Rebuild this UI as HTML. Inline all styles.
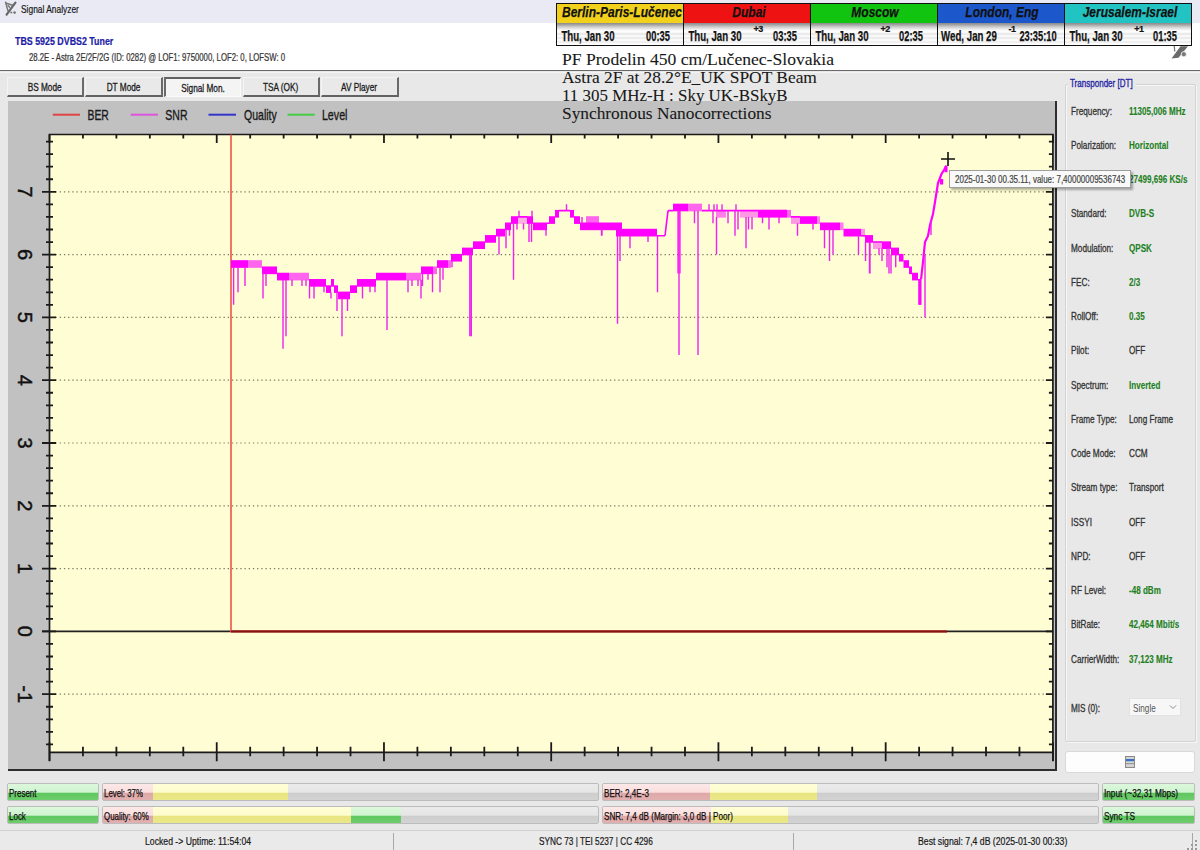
<!DOCTYPE html><html><head><meta charset="utf-8"><style>
*{margin:0;padding:0;box-sizing:border-box}
html,body{width:1200px;height:850px;overflow:hidden;background:#e8e8e8;font-family:"Liberation Sans",sans-serif;position:relative;-webkit-text-stroke:.22px currentColor}
svg{-webkit-text-stroke:0}
.a{position:absolute;white-space:nowrap}
.s{display:inline-block;transform-origin:0 0}
.sc{display:inline-block;transform-origin:50% 0}
#title{left:0;top:0;width:1200px;height:23px;background:#e9eaf4}
#hdr{left:0;top:23px;width:1200px;height:47px;background:#fff}
#hline{left:0;top:70px;width:1200px;height:1.3px;background:#686868}
#hline2{left:0;top:72px;width:1200px;height:1.3px;background:#f3f3f3}
.btn{top:77px;height:20px;background:#e9e9e9;border-top:1px solid #f4f4f4;border-left:1px solid #f4f4f4;border-right:2px solid #6a6a6a;border-bottom:2px solid #626262;font-size:11px;color:#1a1a1a;text-align:center;line-height:19px;-webkit-text-stroke:.3px #1a1a1a}
.btn.on{background:#f4f4f4;border-top:2px solid #626262;border-left:2px solid #6a6a6a;border-right:1px solid #fafafa;border-bottom:1px solid #fafafa;line-height:19px}
#panel{left:8px;top:101px;width:1049px;height:670px;background:#c1c1c1;border-right:2px solid #2e2e2e;border-bottom:2px solid #2e2e2e}
.clk{top:3px;height:43px;border-top:1.5px solid #111;border-bottom:1.5px solid #111;border-left:1.5px solid #111;overflow:hidden}
.clk .h{position:absolute;left:0;top:0;right:0;height:19.5px;font:italic bold 15px "Liberation Sans",sans-serif;color:#111;line-height:16px}
.cx{position:absolute;left:calc(50% + 1.5px);top:0;display:inline-block;width:max-content;transform-origin:0 0;-webkit-text-stroke:.25px #111}
.clk .d{position:absolute;left:0;top:19px;right:0;bottom:0;background:linear-gradient(#8a8a8a,#a8a8a8 2px,#cfcfcf 4px,#e9e9e9 6px,#f6f6f6 7px,#fff 9px,#e4e4e4 11px,#fff 13px,#e6e6e6 15px,#fff 17px,#ebebeb 19px,#fff 21px,#fff)}
.clk .dt{position:absolute;top:3.9px;width:0;font:bold 15px "Liberation Sans",sans-serif;color:#141414}
.clk .tm{position:absolute;top:3.9px;width:0;font:bold 15px "Liberation Sans",sans-serif;color:#141414}
.clk .of{position:absolute;top:0.5px;width:20px;text-align:center;letter-spacing:-.6px;font:bold 9px "Liberation Sans",sans-serif;color:#141414}
.ov{left:562px;font:16.3px "Liberation Serif",serif;color:#181818;-webkit-text-stroke:.08px #181818}
#grp{left:1065px;top:84px;width:131px;height:658px;border:1px solid #d4d4d4;border-radius:2px;box-shadow:inset 1px 1px 0 #f6f6f6,1px 1px 0 #f6f6f6}
#grpt{left:1068px;top:77px;background:#e8e8e8;padding:0 2px;font-size:11px;color:#2626a4;height:13px;width:68px;-webkit-text-stroke:.35px #2626a4}
.lb{left:1070.5px;font-size:10.5px;color:#333;-webkit-text-stroke:.3px #333}
.vl{left:1128.5px;font-size:10.5px;color:#218021;font-weight:bold;-webkit-text-stroke:.1px #218021}
.vk{left:1128.5px;font-size:10.5px;color:#333;-webkit-text-stroke:.3px #333}
.pb{height:18px;border:1px solid #bcbcbc;border-radius:2px;overflow:hidden;background:linear-gradient(#ebebeb,#e5e5e5 52%,#cdcdcd 56%,#d3d3d3)}
.pb i{position:absolute;top:0;bottom:0}
.pk{background:linear-gradient(#fde8e8,#fbdede 52%,#dea8a8 56%,#e2b0b0)}
.yl{background:linear-gradient(#fffed6,#fdfcce 52%,#e8e480 56%,#ebe88a)}
.gr{background:linear-gradient(#dcf8dc,#cff3cf 52%,#5fc75f 56%,#6dcd6d)}
.pt{position:absolute;left:1px;top:2.5px;font-size:10.5px;color:#111;-webkit-text-stroke:.25px #111;white-space:nowrap;transform-origin:0 0}
#sbar{left:0;top:830px;width:1200px;height:20px;border-top:1px solid #d0d0d0;background:#eaeaea}
.st{top:835px;font-size:11px;color:#1a1a1a}
</style></head><body>
<div id="title" class="a"></div>
<svg class="a" style="left:0;top:0" width="22" height="18" viewBox="0 0 22 18"><path d="M5.6 2.2 L7.9 10.6 M6.4 3.3 L12.6 5.2 M8.3 5.8 L9.6 7.2" stroke="#777" stroke-width="1.5" fill="none" stroke-linecap="round"/><path d="M15.4 2.6 L6.6 14.6" stroke="#666" stroke-width="2.2" stroke-linecap="round"/><circle cx="11.3" cy="12.5" r="1.1" fill="#777"/><circle cx="14.6" cy="12.6" r="1.3" fill="#777"/></svg>
<div class="a" style="left:20.5px;top:3px;font-size:11.5px;color:#1a1a1a"><span class="s" style="transform:scaleX(0.73)">Signal Analyzer</span></div>
<div id="hdr" class="a"></div>
<div class="a" style="left:15px;top:35px;font-size:11.5px;color:#1c1ca6;font-weight:bold"><span class="s" style="transform:scaleX(0.77)">TBS 5925 DVBS2 Tuner</span></div>
<div class="a" style="left:29px;top:52px;font-size:10px;color:#353535"><span class="s" style="transform:scaleX(0.777)">28.2E - Astra 2E/2F/2G (ID: 0282) @ LOF1: 9750000, LOF2: 0, LOFSW: 0</span></div>
<div id="hline" class="a"></div><div id="hline2" class="a"></div>
<div class="a btn" style="left:7px;width:77px"><span class="sc" style="transform:scaleX(0.75)">BS Mode</span></div>
<div class="a btn" style="left:85px;width:78px"><span class="sc" style="transform:scaleX(0.75)">DT Mode</span></div>
<div class="a btn on" style="left:164px;width:77px"><span class="sc" style="transform:scaleX(0.75)">Signal Mon.</span></div>
<div class="a btn" style="left:243px;width:77px"><span class="sc" style="transform:scaleX(0.75)">TSA (OK)</span></div>
<div class="a btn" style="left:321px;width:78px"><span class="sc" style="transform:scaleX(0.75)">AV Player</span></div>
<div id="panel" class="a"></div>
<svg id="chart" class="a" style="left:0;top:0" width="1200" height="850"><rect x="49.5" y="134.5" width="1003.4000000000001" height="617.8" fill="#fffdd3"/>
<line x1="55.5" y1="191.80" x2="1046.9" y2="191.80" stroke="#7a7a60" stroke-width="1.2" stroke-dasharray="1.3 2.9"/>
<line x1="55.5" y1="254.60" x2="1046.9" y2="254.60" stroke="#7a7a60" stroke-width="1.2" stroke-dasharray="1.3 2.9"/>
<line x1="55.5" y1="317.40" x2="1046.9" y2="317.40" stroke="#7a7a60" stroke-width="1.2" stroke-dasharray="1.3 2.9"/>
<line x1="55.5" y1="380.20" x2="1046.9" y2="380.20" stroke="#7a7a60" stroke-width="1.2" stroke-dasharray="1.3 2.9"/>
<line x1="55.5" y1="443.00" x2="1046.9" y2="443.00" stroke="#7a7a60" stroke-width="1.2" stroke-dasharray="1.3 2.9"/>
<line x1="55.5" y1="505.80" x2="1046.9" y2="505.80" stroke="#7a7a60" stroke-width="1.2" stroke-dasharray="1.3 2.9"/>
<line x1="55.5" y1="568.60" x2="1046.9" y2="568.60" stroke="#7a7a60" stroke-width="1.2" stroke-dasharray="1.3 2.9"/>
<line x1="55.5" y1="694.20" x2="1046.9" y2="694.20" stroke="#7a7a60" stroke-width="1.2" stroke-dasharray="1.3 2.9"/>
<line x1="42" y1="631.40" x2="1052.9" y2="631.40" stroke="#222" stroke-width="1.6"/>
<path d="M49.5 134.5 H1052.9 M49.5 133.8 V760.8 M1052.9 133.8 V760.8 M49.5 752.3 H1052.9" stroke="#1a1a1a" stroke-width="1.7" fill="none"/>
<path d="M49.50 742.3 V761.3 M49.50 134.5 V143.0 M82.95 746.8 V756.3 M82.95 134.5 V138.5 M116.39 746.8 V756.3 M116.39 134.5 V138.5 M149.84 746.8 V756.3 M149.84 134.5 V138.5 M183.29 746.8 V756.3 M183.29 134.5 V138.5 M216.73 742.3 V761.3 M216.73 134.5 V143.0 M250.18 746.8 V756.3 M250.18 134.5 V138.5 M283.63 746.8 V756.3 M283.63 134.5 V138.5 M317.07 746.8 V756.3 M317.07 134.5 V138.5 M350.52 746.8 V756.3 M350.52 134.5 V138.5 M383.97 742.3 V761.3 M383.97 134.5 V143.0 M417.41 746.8 V756.3 M417.41 134.5 V138.5 M450.86 746.8 V756.3 M450.86 134.5 V138.5 M484.31 746.8 V756.3 M484.31 134.5 V138.5 M517.75 746.8 V756.3 M517.75 134.5 V138.5 M551.20 742.3 V761.3 M551.20 134.5 V143.0 M584.65 746.8 V756.3 M584.65 134.5 V138.5 M618.09 746.8 V756.3 M618.09 134.5 V138.5 M651.54 746.8 V756.3 M651.54 134.5 V138.5 M684.99 746.8 V756.3 M684.99 134.5 V138.5 M718.43 742.3 V761.3 M718.43 134.5 V143.0 M751.88 746.8 V756.3 M751.88 134.5 V138.5 M785.33 746.8 V756.3 M785.33 134.5 V138.5 M818.77 746.8 V756.3 M818.77 134.5 V138.5 M852.22 746.8 V756.3 M852.22 134.5 V138.5 M885.67 742.3 V761.3 M885.67 134.5 V143.0 M919.11 746.8 V756.3 M919.11 134.5 V138.5 M952.56 746.8 V756.3 M952.56 134.5 V138.5 M986.01 746.8 V756.3 M986.01 134.5 V138.5 M1019.45 746.8 V756.3 M1019.45 134.5 V138.5 M1052.90 742.3 V761.3 M1052.90 134.5 V143.0 M46.0 744.44 H53.0 M1048.9 744.44 H1052.9 M46.0 731.88 H53.0 M1048.9 731.88 H1052.9 M46.0 719.32 H53.0 M1048.9 719.32 H1052.9 M46.0 706.76 H53.0 M1048.9 706.76 H1052.9 M42.0 694.20 H56.0 M1045.9 694.20 H1052.9 M46.0 681.64 H53.0 M1048.9 681.64 H1052.9 M46.0 669.08 H53.0 M1048.9 669.08 H1052.9 M46.0 656.52 H53.0 M1048.9 656.52 H1052.9 M46.0 643.96 H53.0 M1048.9 643.96 H1052.9 M42.0 631.40 H56.0 M1045.9 631.40 H1052.9 M46.0 618.84 H53.0 M1048.9 618.84 H1052.9 M46.0 606.28 H53.0 M1048.9 606.28 H1052.9 M46.0 593.72 H53.0 M1048.9 593.72 H1052.9 M46.0 581.16 H53.0 M1048.9 581.16 H1052.9 M42.0 568.60 H56.0 M1045.9 568.60 H1052.9 M46.0 556.04 H53.0 M1048.9 556.04 H1052.9 M46.0 543.48 H53.0 M1048.9 543.48 H1052.9 M46.0 530.92 H53.0 M1048.9 530.92 H1052.9 M46.0 518.36 H53.0 M1048.9 518.36 H1052.9 M42.0 505.80 H56.0 M1045.9 505.80 H1052.9 M46.0 493.24 H53.0 M1048.9 493.24 H1052.9 M46.0 480.68 H53.0 M1048.9 480.68 H1052.9 M46.0 468.12 H53.0 M1048.9 468.12 H1052.9 M46.0 455.56 H53.0 M1048.9 455.56 H1052.9 M42.0 443.00 H56.0 M1045.9 443.00 H1052.9 M46.0 430.44 H53.0 M1048.9 430.44 H1052.9 M46.0 417.88 H53.0 M1048.9 417.88 H1052.9 M46.0 405.32 H53.0 M1048.9 405.32 H1052.9 M46.0 392.76 H53.0 M1048.9 392.76 H1052.9 M42.0 380.20 H56.0 M1045.9 380.20 H1052.9 M46.0 367.64 H53.0 M1048.9 367.64 H1052.9 M46.0 355.08 H53.0 M1048.9 355.08 H1052.9 M46.0 342.52 H53.0 M1048.9 342.52 H1052.9 M46.0 329.96 H53.0 M1048.9 329.96 H1052.9 M42.0 317.40 H56.0 M1045.9 317.40 H1052.9 M46.0 304.84 H53.0 M1048.9 304.84 H1052.9 M46.0 292.28 H53.0 M1048.9 292.28 H1052.9 M46.0 279.72 H53.0 M1048.9 279.72 H1052.9 M46.0 267.16 H53.0 M1048.9 267.16 H1052.9 M42.0 254.60 H56.0 M1045.9 254.60 H1052.9 M46.0 242.04 H53.0 M1048.9 242.04 H1052.9 M46.0 229.48 H53.0 M1048.9 229.48 H1052.9 M46.0 216.92 H53.0 M1048.9 216.92 H1052.9 M46.0 204.36 H53.0 M1048.9 204.36 H1052.9 M42.0 191.80 H56.0 M1045.9 191.80 H1052.9 M46.0 179.24 H53.0 M1048.9 179.24 H1052.9 M46.0 166.68 H53.0 M1048.9 166.68 H1052.9 M46.0 154.12 H53.0 M1048.9 154.12 H1052.9 M46.0 141.56 H53.0 M1048.9 141.56 H1052.9" stroke="#1a1a1a" stroke-width="1.8" fill="none"/>
<text transform="translate(25 191.80) rotate(90)" text-anchor="middle" dy="0.36em" font-family="Liberation Sans" font-size="20" fill="#111" stroke="#111" stroke-width=".45">7</text>
<text transform="translate(25 254.60) rotate(90)" text-anchor="middle" dy="0.36em" font-family="Liberation Sans" font-size="20" fill="#111" stroke="#111" stroke-width=".45">6</text>
<text transform="translate(25 317.40) rotate(90)" text-anchor="middle" dy="0.36em" font-family="Liberation Sans" font-size="20" fill="#111" stroke="#111" stroke-width=".45">5</text>
<text transform="translate(25 380.20) rotate(90)" text-anchor="middle" dy="0.36em" font-family="Liberation Sans" font-size="20" fill="#111" stroke="#111" stroke-width=".45">4</text>
<text transform="translate(25 443.00) rotate(90)" text-anchor="middle" dy="0.36em" font-family="Liberation Sans" font-size="20" fill="#111" stroke="#111" stroke-width=".45">3</text>
<text transform="translate(25 505.80) rotate(90)" text-anchor="middle" dy="0.36em" font-family="Liberation Sans" font-size="20" fill="#111" stroke="#111" stroke-width=".45">2</text>
<text transform="translate(25 568.60) rotate(90)" text-anchor="middle" dy="0.36em" font-family="Liberation Sans" font-size="20" fill="#111" stroke="#111" stroke-width=".45">1</text>
<text transform="translate(25 631.40) rotate(90)" text-anchor="middle" dy="0.36em" font-family="Liberation Sans" font-size="20" fill="#111" stroke="#111" stroke-width=".45">0</text>
<text transform="translate(25 694.20) rotate(90)" text-anchor="middle" dy="0.36em" font-family="Liberation Sans" font-size="20" fill="#111" stroke="#111" stroke-width=".45">-1</text>
<line x1="52.8" y1="114.7" x2="80" y2="114.7" stroke="#e04545" stroke-width="2"/>
<text x="87.5" y="119.5" font-family="Liberation Sans" font-size="14.5" fill="#1a1a1a" stroke="#1a1a1a" stroke-width=".35" textLength="21.3" lengthAdjust="spacingAndGlyphs">BER</text>
<line x1="130.7" y1="114.7" x2="158" y2="114.7" stroke="#dd55dd" stroke-width="2"/>
<text x="165.3" y="119.5" font-family="Liberation Sans" font-size="14.5" fill="#1a1a1a" stroke="#1a1a1a" stroke-width=".35" textLength="22.2" lengthAdjust="spacingAndGlyphs">SNR</text>
<line x1="208.5" y1="114.7" x2="236" y2="114.7" stroke="#3535cc" stroke-width="2"/>
<text x="244" y="119.5" font-family="Liberation Sans" font-size="14.5" fill="#1a1a1a" stroke="#1a1a1a" stroke-width=".35" textLength="32.8" lengthAdjust="spacingAndGlyphs">Quality</text>
<line x1="287.5" y1="114.7" x2="314.7" y2="114.7" stroke="#44cc44" stroke-width="2"/>
<text x="321.9" y="119.5" font-family="Liberation Sans" font-size="14.5" fill="#1a1a1a" stroke="#1a1a1a" stroke-width=".35" textLength="25.6" lengthAdjust="spacingAndGlyphs">Level</text>
<path d="M231 134.5 V631.40 H947" stroke="#ec5646" stroke-width="1.6" fill="none"/>
<line x1="231" y1="631.40" x2="947" y2="631.40" stroke="#8a1010" stroke-width="2"/>
<rect x="231" y="260.18" width="17" height="7.68" fill="#ff00ff" fill-opacity="1"/>
<rect x="248" y="260.18" width="14" height="7.68" fill="#ff00ff" fill-opacity="0.6"/>
<rect x="262" y="266.46" width="15" height="7.68" fill="#ff00ff" fill-opacity="1"/>
<rect x="277" y="272.74" width="12" height="7.68" fill="#ff00ff" fill-opacity="1"/>
<rect x="289" y="272.74" width="20" height="7.68" fill="#ff00ff" fill-opacity="0.6"/>
<rect x="309" y="279.02" width="17" height="7.68" fill="#ff00ff" fill-opacity="1"/>
<rect x="326" y="285.30" width="5" height="7.68" fill="#ff00ff" fill-opacity="1"/>
<rect x="331" y="279.02" width="3" height="7.68" fill="#ff00ff" fill-opacity="1"/>
<rect x="334" y="285.30" width="4" height="7.68" fill="#ff00ff" fill-opacity="1"/>
<rect x="338" y="291.58" width="12" height="7.68" fill="#ff00ff" fill-opacity="1"/>
<rect x="350" y="285.30" width="7" height="7.68" fill="#ff00ff" fill-opacity="1"/>
<rect x="357" y="279.02" width="19" height="7.68" fill="#ff00ff" fill-opacity="1"/>
<rect x="376" y="272.74" width="30" height="7.68" fill="#ff00ff" fill-opacity="1"/>
<rect x="406" y="272.74" width="15" height="7.68" fill="#ff00ff" fill-opacity="0.6"/>
<rect x="421" y="266.46" width="12" height="7.68" fill="#ff00ff" fill-opacity="1"/>
<rect x="433" y="266.46" width="4" height="7.68" fill="#ff00ff" fill-opacity="0.6"/>
<rect x="437" y="260.18" width="11" height="7.68" fill="#ff00ff" fill-opacity="1"/>
<rect x="448" y="260.18" width="3" height="7.68" fill="#ff00ff" fill-opacity="0.6"/>
<rect x="451" y="253.90" width="11" height="7.68" fill="#ff00ff" fill-opacity="1"/>
<rect x="462" y="247.62" width="11" height="7.68" fill="#ff00ff" fill-opacity="1"/>
<rect x="473" y="241.34" width="12" height="7.68" fill="#ff00ff" fill-opacity="1"/>
<rect x="485" y="235.06" width="11" height="7.68" fill="#ff00ff" fill-opacity="1"/>
<rect x="496" y="228.78" width="9" height="7.68" fill="#ff00ff" fill-opacity="1"/>
<rect x="505" y="222.50" width="6" height="7.68" fill="#ff00ff" fill-opacity="1"/>
<rect x="511" y="216.22" width="7" height="7.68" fill="#ff00ff" fill-opacity="1"/>
<rect x="518" y="216.22" width="9" height="7.68" fill="#ff00ff" fill-opacity="0.3"/>
<rect x="527" y="216.22" width="6" height="7.68" fill="#ff00ff" fill-opacity="1"/>
<rect x="533" y="222.50" width="14" height="7.68" fill="#ff00ff" fill-opacity="1"/>
<rect x="549" y="216.22" width="6" height="7.68" fill="#ff00ff" fill-opacity="1"/>
<rect x="555" y="209.94" width="4" height="7.68" fill="#ff00ff" fill-opacity="1"/>
<rect x="570" y="209.94" width="4" height="7.68" fill="#ff00ff" fill-opacity="1"/>
<rect x="574" y="216.22" width="6" height="7.68" fill="#ff00ff" fill-opacity="1"/>
<rect x="580" y="222.50" width="20" height="7.68" fill="#ff00ff" fill-opacity="1"/>
<rect x="586" y="216.22" width="13" height="7.68" fill="#ff00ff" fill-opacity="0.6"/>
<rect x="600" y="222.50" width="22" height="7.68" fill="#ff00ff" fill-opacity="1"/>
<rect x="616" y="228.78" width="41" height="7.68" fill="#ff00ff" fill-opacity="1"/>
<rect x="673" y="203.66" width="15" height="7.68" fill="#ff00ff" fill-opacity="1"/>
<rect x="688" y="203.66" width="14" height="7.68" fill="#ff00ff" fill-opacity="0.6"/>
<rect x="716" y="209.94" width="10" height="7.68" fill="#ff00ff" fill-opacity="0.5"/>
<rect x="740" y="209.94" width="18" height="7.68" fill="#ff00ff" fill-opacity="0.4"/>
<rect x="758" y="209.94" width="29" height="7.68" fill="#ff00ff" fill-opacity="1"/>
<rect x="787" y="209.94" width="4" height="7.68" fill="#ff00ff" fill-opacity="0.6"/>
<rect x="791" y="216.22" width="9" height="7.68" fill="#ff00ff" fill-opacity="0.4"/>
<rect x="800" y="216.22" width="17" height="7.68" fill="#ff00ff" fill-opacity="1"/>
<rect x="817" y="216.22" width="3" height="7.68" fill="#ff00ff" fill-opacity="0.5"/>
<rect x="820" y="222.50" width="20" height="7.68" fill="#ff00ff" fill-opacity="1"/>
<rect x="840" y="222.50" width="3.5" height="7.68" fill="#ff00ff" fill-opacity="0.5"/>
<rect x="843.5" y="228.78" width="17.5" height="7.68" fill="#ff00ff" fill-opacity="1"/>
<rect x="861" y="228.78" width="4" height="7.68" fill="#ff00ff" fill-opacity="0.4"/>
<rect x="865" y="235.06" width="8" height="7.68" fill="#ff00ff" fill-opacity="1"/>
<rect x="873" y="241.34" width="9" height="7.68" fill="#ff00ff" fill-opacity="0.4"/>
<rect x="882" y="241.34" width="9" height="7.68" fill="#ff00ff" fill-opacity="1"/>
<rect x="891" y="247.62" width="8" height="7.68" fill="#ff00ff" fill-opacity="1"/>
<rect x="899" y="253.90" width="4.5" height="7.68" fill="#ff00ff" fill-opacity="1"/>
<rect x="903.5" y="260.18" width="5.5" height="7.68" fill="#ff00ff" fill-opacity="1"/>
<rect x="909" y="266.46" width="3" height="7.68" fill="#ff00ff" fill-opacity="1"/>
<rect x="912" y="272.74" width="6" height="7.68" fill="#ff00ff" fill-opacity="1"/>
<path d="M518 216.92 H527 M547 223.20 H549 M559 210.64 H570 M657 235.76 H665 M668 210.64 H673 M702 210.64 H787 M791 216.92 H800 M861 235.76 H865 M873 242.04 H882 M918 279.72 H921 M665 235.76 L668 210.64" stroke="#ff00ff" stroke-width="1.6" fill="none"/>
<polyline points="921,279.5 923,262 925,242 928,236 930,225 933,214 935,202 938,183 941.5,174 944,170 946.5,165.5" stroke="#ff00ff" stroke-width="2.2" fill="none"/>
<path d="M233.6 267.16 V304.84 M238 267.16 V292.28 M245 267.16 V286.00 M263 273.44 V298.56 M266 273.44 V286.00 M283 279.72 V348.80 M286 279.72 V336.24 M292 279.72 V286.00 M302 279.72 V286.00 M306 279.72 V286.00 M309.5 286.00 V298.56 M314 286.00 V298.56 M324 286.00 V292.28 M331 292.28 V298.56 M337 292.28 V311.12 M342 298.56 V336.24 M347.5 298.56 V311.12 M362.5 286.00 V298.56 M370 286.00 V292.28 M375 286.00 V292.28 M387 279.72 V329.96 M408 279.72 V292.28 M412 279.72 V286.00 M418 279.72 V286.00 M421 279.72 V298.56 M422.5 273.44 V286.00 M428 273.44 V279.72 M432.5 273.44 V292.28 M440 267.16 V292.28 M443 267.16 V279.72 M449 267.16 V267.16 M452 260.88 V267.16 M469.8 254.60 V336.24 M471.3 254.60 V336.24 M499 235.76 V254.60 M506 229.48 V248.32 M509.5 229.48 V235.76 M513.5 223.20 V279.72 M517 223.20 V229.48 M523.5 223.20 V229.48 M529 223.20 V242.04 M531.5 223.20 V242.04 M546 229.48 V235.76 M601.5 229.48 V235.76 M602 229.48 V235.76 M617.5 235.76 V323.68 M620 235.76 V260.88 M630 235.76 V248.32 M648 235.76 V242.04 M657.5 235.76 V292.28 M679 210.64 V355.08 M698 210.64 V355.08 M694.5 210.64 V223.20 M713 210.64 V223.20 M716.5 216.92 V254.60 M728 210.64 V223.20 M735 210.64 V235.76 M738 210.64 V229.48 M741 216.92 V216.92 M746 216.92 V248.32 M748.5 216.92 V229.48 M752 216.92 V229.48 M762.5 216.92 V223.20 M769 216.92 V229.48 M779 216.92 V223.20 M797.5 223.20 V235.76 M813 223.20 V229.48 M824.5 229.48 V248.32 M829.5 229.48 V260.88 M833 229.48 V254.60 M858.5 235.76 V254.60 M865.5 242.04 V260.88 M869.5 242.04 V273.44 M879 248.32 V254.60 M870 242.04 V273.44 M874.5 248.32 V248.32 M882 248.32 V260.88 M887 248.32 V267.16 M889 248.32 V273.44 M891 254.60 V273.44 M895.7 254.60 V267.16 M919 279.72 V304.84 M920.5 279.72 V304.84 M925 254.60 V317.40 M931 221 V235" stroke="#ee22ee" stroke-width="1.4" fill="none"/>
<rect x="677" y="210.64" width="4" height="62.80" fill="#ff00ff" fill-opacity=".6"/>
<rect x="918.5" y="279.72" width="3" height="25.12" fill="#ff00ff" fill-opacity=".8"/>
<path d="M519 210.64 V216.92 M532 210.64 V216.92 M566.5 204.36 V210.64 M582 216.92 V223.20 M709 204.36 V210.64 M714 204.36 V210.64 M717 204.36 V210.64 M722 204.36 V210.64 M736 204.36 V210.64" stroke="#ee22ee" stroke-width="1.4" fill="none"/>
<rect x="940" y="179" width="3.2" height="5.5" fill="#ff00ff"/><rect x="944.5" y="166.2" width="3" height="6" fill="#ff00ff"/>
<path d="M941 159 H955 M948 152 V166" stroke="#111" stroke-width="1.6"/></svg>
<div id="grp" class="a"></div>
<div id="grpt" class="a"><span class="s" style="transform:scaleX(0.73)">Transponder [DT]</span></div>
<div class="a lb" style="top:104.6px"><span class="s" style="transform:scaleX(0.78)">Frequency:</span></div>
<div class="a vl" style="top:104.6px"><span class="s" style="transform:scaleX(0.77)">11305,006 MHz</span></div>
<div class="a lb" style="top:138.9px"><span class="s" style="transform:scaleX(0.78)">Polarization:</span></div>
<div class="a vl" style="top:138.9px"><span class="s" style="transform:scaleX(0.77)">Horizontal</span></div>
<div class="a lb" style="top:173.1px"><span class="s" style="transform:scaleX(0.78)">Symbol Rate:</span></div>
<div class="a vl" style="top:173.1px"><span class="s" style="transform:scaleX(0.77)">27499,696 KS/s</span></div>
<div class="a lb" style="top:207.4px"><span class="s" style="transform:scaleX(0.78)">Standard:</span></div>
<div class="a vl" style="top:207.4px"><span class="s" style="transform:scaleX(0.77)">DVB-S</span></div>
<div class="a lb" style="top:241.6px"><span class="s" style="transform:scaleX(0.78)">Modulation:</span></div>
<div class="a vl" style="top:241.6px"><span class="s" style="transform:scaleX(0.77)">QPSK</span></div>
<div class="a lb" style="top:275.9px"><span class="s" style="transform:scaleX(0.78)">FEC:</span></div>
<div class="a vl" style="top:275.9px"><span class="s" style="transform:scaleX(0.77)">2/3</span></div>
<div class="a lb" style="top:310.1px"><span class="s" style="transform:scaleX(0.78)">RollOff:</span></div>
<div class="a vl" style="top:310.1px"><span class="s" style="transform:scaleX(0.77)">0.35</span></div>
<div class="a lb" style="top:344.4px"><span class="s" style="transform:scaleX(0.78)">Pilot:</span></div>
<div class="a vk" style="top:344.4px"><span class="s" style="transform:scaleX(0.78)">OFF</span></div>
<div class="a lb" style="top:378.6px"><span class="s" style="transform:scaleX(0.78)">Spectrum:</span></div>
<div class="a vl" style="top:378.6px"><span class="s" style="transform:scaleX(0.77)">Inverted</span></div>
<div class="a lb" style="top:412.9px"><span class="s" style="transform:scaleX(0.78)">Frame Type:</span></div>
<div class="a vk" style="top:412.9px"><span class="s" style="transform:scaleX(0.78)">Long Frame</span></div>
<div class="a lb" style="top:447.1px"><span class="s" style="transform:scaleX(0.78)">Code Mode:</span></div>
<div class="a vk" style="top:447.1px"><span class="s" style="transform:scaleX(0.78)">CCM</span></div>
<div class="a lb" style="top:481.4px"><span class="s" style="transform:scaleX(0.78)">Stream type:</span></div>
<div class="a vk" style="top:481.4px"><span class="s" style="transform:scaleX(0.78)">Transport</span></div>
<div class="a lb" style="top:515.6px"><span class="s" style="transform:scaleX(0.78)">ISSYI</span></div>
<div class="a vk" style="top:515.6px"><span class="s" style="transform:scaleX(0.78)">OFF</span></div>
<div class="a lb" style="top:549.8px"><span class="s" style="transform:scaleX(0.78)">NPD:</span></div>
<div class="a vk" style="top:549.8px"><span class="s" style="transform:scaleX(0.78)">OFF</span></div>
<div class="a lb" style="top:584.1px"><span class="s" style="transform:scaleX(0.78)">RF Level:</span></div>
<div class="a vl" style="top:584.1px"><span class="s" style="transform:scaleX(0.77)">-48 dBm</span></div>
<div class="a lb" style="top:618.3px"><span class="s" style="transform:scaleX(0.78)">BitRate:</span></div>
<div class="a vl" style="top:618.3px"><span class="s" style="transform:scaleX(0.77)">42,464 Mbit/s</span></div>
<div class="a lb" style="top:652.6px"><span class="s" style="transform:scaleX(0.78)">CarrierWidth:</span></div>
<div class="a vl" style="top:652.6px"><span class="s" style="transform:scaleX(0.77)">37,123 MHz</span></div>
<div class="a lb" style="top:702px"><span class="s" style="transform:scaleX(0.78)">MIS (0):</span></div>
<div class="a" style="left:1129px;top:698px;width:52px;height:18px;background:#f7f7f7;border:1px solid #e2e2e2"></div>
<div class="a vk" style="left:1133px;top:702px;color:#555;-webkit-text-stroke:0"><span class="s" style="transform:scaleX(0.78)">Single</span></div>
<svg class="a" style="left:1169px;top:704px" width="8" height="6"><path d="M1 1.5 L4 4.5 L7 1.5" stroke="#888" stroke-width="1" fill="none"/></svg>
<div class="a" style="left:1065px;top:751px;width:130px;height:22px;background:#fdfdfd;border:1px solid #d9d9d9;border-radius:3px"></div>
<svg class="a" style="left:1124px;top:755px" width="12" height="14"><rect x="1.5" y="1.5" width="9" height="11" fill="#d4d4d4" stroke="#8a8a8a" stroke-width="1"/><rect x="2" y="4" width="8" height="2.2" fill="#3b6fc4"/><rect x="2" y="8" width="8" height="1.2" fill="#9a9a9a"/></svg>
<div class="a pb" style="left:7px;top:783px;width:92px"><i class="gr" style="left:0px;width:92px"></i><span class="pt" style="transform:scaleX(0.76)">Present</span></div>
<div class="a pb" style="left:7px;top:806px;width:92px"><i class="gr" style="left:0px;width:92px"></i><span class="pt" style="transform:scaleX(0.76)">Lock</span></div>
<div class="a pb" style="left:102px;top:783px;width:497px"><i class="pk" style="left:0px;width:50px"></i><i class="yl" style="left:50px;width:135px"></i><span class="pt" style="transform:scaleX(0.75)">Level: 37%</span></div>
<div class="a pb" style="left:102px;top:806px;width:497px"><i class="pk" style="left:0px;width:50px"></i><i class="yl" style="left:50px;width:198px"></i><i class="gr" style="left:248px;width:50px"></i><span class="pt" style="transform:scaleX(0.75)">Quality: 60%</span></div>
<div class="a pb" style="left:602px;top:783px;width:497px"><i class="pk" style="left:0px;width:107px"></i><i class="yl" style="left:107px;width:107px"></i><span class="pt" style="transform:scaleX(0.77)">BER: 2,4E-3</span></div>
<div class="a pb" style="left:602px;top:806px;width:497px"><i class="pk" style="left:0px;width:108px"></i><i class="yl" style="left:108px;width:77px"></i><span class="pt" style="transform:scaleX(0.77)">SNR: 7,4 dB (Margin: 3,0 dB | Poor)</span></div>
<div class="a pb" style="left:1102px;top:783px;width:93px"><i class="gr" style="left:0px;width:93px"></i><span class="pt" style="transform:scaleX(0.785)">Input (~32,31 Mbps)</span></div>
<div class="a pb" style="left:1102px;top:806px;width:93px"><i class="gr" style="left:0px;width:93px"></i><span class="pt" style="transform:scaleX(0.785)">Sync TS</span></div>
<div id="sbar" class="a"></div>
<div class="a" style="left:393px;top:833px;width:1px;height:17px;background:#a8a8a8"></div>
<div class="a" style="left:793px;top:833px;width:1px;height:17px;background:#a8a8a8"></div>
<div class="a" style="left:1192px;top:833px;width:1px;height:17px;background:#a8a8a8"></div>
<svg class="a" style="left:1186px;top:838px" width="14" height="12"><g fill="#9a9a9a"><rect x="9" y="2" width="2" height="2"/><rect x="9" y="6" width="2" height="2"/><rect x="5" y="6" width="2" height="2"/><rect x="9" y="10" width="2" height="2"/><rect x="5" y="10" width="2" height="2"/><rect x="1" y="10" width="2" height="2"/></g></svg>
<div class="a st" style="left:145px"><span class="s" style="transform:scaleX(0.788)">Locked -&gt; Uptime: 11:54:04</span></div>
<div class="a st" style="left:538.6px"><span class="s" style="transform:scaleX(0.75)">SYNC 73 | TEI 5237 | CC 4296</span></div>
<div class="a st" style="left:918.3px"><span class="s" style="transform:scaleX(0.79)">Best signal: 7,4 dB (2025-01-30 00:33)</span></div>
<div class="a clk" style="left:556.25px;width:126.90px"><div class="h" style="background:#f2d11c"><span class="cx" style="transform:scaleX(.8) translateX(-50%)">Berlin-Paris-Lučenec</span></div><div class="d"><span class="dt" style="left:29.5px"><span class="cx" style="transform:scaleX(.645) translateX(-50%)">Thu, Jan 30</span></span><span class="tm" style="left:98.9px"><span class="cx" style="transform:scaleX(.62) translateX(-50%)">00:35</span></span></div></div>
<div class="a clk" style="left:683.15px;width:126.90px"><div class="h" style="background:#ee1212"><span class="cx" style="transform:scaleX(.8) translateX(-50%)">Dubai</span></div><div class="d"><span class="dt" style="left:29.5px"><span class="cx" style="transform:scaleX(.645) translateX(-50%)">Thu, Jan 30</span></span><span class="of" style="left:64px">+3</span><span class="tm" style="left:98.9px"><span class="cx" style="transform:scaleX(.62) translateX(-50%)">03:35</span></span></div></div>
<div class="a clk" style="left:810.05px;width:126.90px"><div class="h" style="background:#10c410"><span class="cx" style="transform:scaleX(.8) translateX(-50%)">Moscow</span></div><div class="d"><span class="dt" style="left:29.5px"><span class="cx" style="transform:scaleX(.645) translateX(-50%)">Thu, Jan 30</span></span><span class="of" style="left:64px">+2</span><span class="tm" style="left:98.9px"><span class="cx" style="transform:scaleX(.62) translateX(-50%)">02:35</span></span></div></div>
<div class="a clk" style="left:936.95px;width:126.90px"><div class="h" style="background:#1d57cc"><span class="cx" style="transform:scaleX(.8) translateX(-50%)">London, Eng</span></div><div class="d"><span class="dt" style="left:29.5px"><span class="cx" style="transform:scaleX(.645) translateX(-50%)">Wed, Jan 29</span></span><span class="of" style="left:64px">-1</span><span class="tm" style="left:98.9px"><span class="cx" style="transform:scaleX(.62) translateX(-50%)">23:35:10</span></span></div></div>
<div class="a clk" style="left:1063.85px;width:128.40px;border-right:1.5px solid #111"><div class="h" style="background:#22c3c3"><span class="cx" style="transform:scaleX(.8) translateX(-50%)">Jerusalem-Israel</span></div><div class="d"><span class="dt" style="left:29.5px"><span class="cx" style="transform:scaleX(.645) translateX(-50%)">Thu, Jan 30</span></span><span class="of" style="left:64px">+1</span><span class="tm" style="left:98.9px"><span class="cx" style="transform:scaleX(.62) translateX(-50%)">01:35</span></span></div></div>
<div class="a ov" style="top:50px"><span class="s" style="transform:scaleX(1.08)">PF Prodelin 450 cm/Lučenec-Slovakia</span></div>
<div class="a ov" style="top:68px"><span class="s" style="transform:scaleX(1.068)">Astra 2F at 28.2°E_UK SPOT Beam</span></div>
<div class="a ov" style="top:86px"><span class="s" style="transform:scaleX(1.04)">11 305 MHz-H : Sky UK-BSkyB</span></div>
<div class="a ov" style="top:104px"><span class="s" style="transform:scaleX(1.065)">Synchronous Nanocorrections</span></div>
<svg class="a" style="left:0;top:0" width="1200" height="70"><polygon points="1171.5,58.5 1180.5,46.3 1188,46.3 1178.5,57.8" fill="#6a6a6a"/><path d="M1174.3 46 L1174.7 51.5" stroke="#7a7a7a" stroke-width="1.3"/><circle cx="1183.8" cy="54.2" r="2.6" fill="#7a7a7a" stroke="#fff" stroke-width=".8"/></svg>
<div class="a" style="left:949px;top:170px;width:182px;height:18px;background:#f9f9f9;border:1px solid #9e9e9e;box-shadow:1.5px 1.5px 2px rgba(0,0,0,.3);font-size:10.5px;color:#454545;padding:2px 0 0 4.5px"><span class="s" style="transform:scaleX(0.76)">2025-01-30 00.35.11, value: 7,40000009536743</span></div>
</body></html>
